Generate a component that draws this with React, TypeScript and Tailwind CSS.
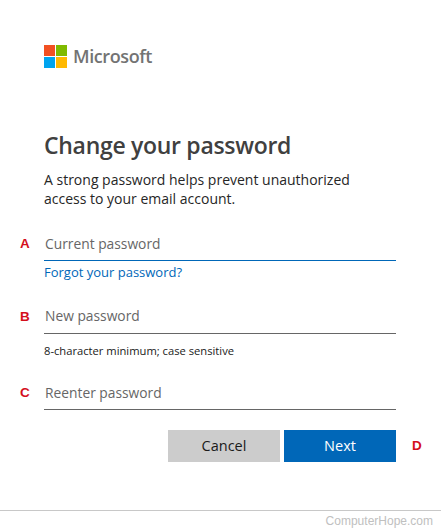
export default function App() {
  const font = { fontFamily: '"Open Sans", "Noto Sans", sans-serif' };
  const Letter = ({ c }: { c: string }) => (
    <div className="w-[44px] pl-[20px] text-[13.5px] font-bold text-[#d40f1c] font-['Liberation_Sans',sans-serif]">{c}</div>
  );
  return (
    <div className="w-[441px] h-[531px] bg-white overflow-hidden flex flex-col font-['Open_Sans',sans-serif]" style={font}>
      <div className="h-[510px] flex flex-col">
        <div className="pl-[44px] pt-[45px] flex items-center h-[68px]">
          <svg width="23" height="23" viewBox="0 0 23 23" className="block shrink-0">
            <rect x="0" y="0" width="11" height="11" fill="#f25022" />
            <rect x="12" y="0" width="11" height="11" fill="#7fba00" />
            <rect x="0" y="12" width="11" height="11" fill="#00a4ef" />
            <rect x="12" y="12" width="11" height="11" fill="#ffb900" />
          </svg>
          <span className="ml-[6px] text-[18px] font-semibold text-[#737373] leading-[23px] tracking-[-0.4px]">Microsoft</span>
        </div>
        <h1 className="pl-[44px] mt-[60px] text-[23px] leading-[34px] font-semibold text-[#404040] tracking-[-0.3px]">Change your password</h1>
        <p className="pl-[44px] mt-[8px] w-[370px] text-[14px] leading-[19px] text-[#262626]">
          A strong password helps prevent unauthorized access to your email account.
        </p>
        <div className="flex items-center mt-[19px]">
          <Letter c="A" />
          <div className="w-[352px] h-[34px] border-b border-[#0067b8] pl-[1px] text-[13.8px] leading-[33px] text-[#666666]">Current password</div>
        </div>
        <div className="pl-[44px] mt-[1px] text-[13px] leading-[20px] text-[#0067b8]">Forgot your password?</div>
        <div className="flex items-center mt-[18px]">
          <Letter c="B" />
          <div className="w-[352px] h-[34px] border-b border-[#666666] pl-[1px] text-[13.8px] leading-[31px] text-[#666666]">New password</div>
        </div>
        <div className="pl-[44px] mt-[9px] text-[11.2px] leading-[16px] text-[#1a1a1a]">8-character minimum; case sensitive</div>
        <div className="flex items-center mt-[17px]">
          <Letter c="C" />
          <div className="w-[352px] h-[34px] border-b border-[#666666] pl-[1px] text-[13.8px] leading-[33px] text-[#666666]">Reenter password</div>
        </div>
        <div className="flex items-center mt-[20px] pl-[168px]">
          <button className="w-[112px] h-[32px] bg-[#cccccc] text-[14.5px] text-[#1a1a1a]">Cancel</button>
          <button className="ml-[4px] w-[112px] h-[32px] bg-[#0067b8] text-[14.5px] text-white">Next</button>
          <span className="ml-[16px] text-[13.5px] font-bold text-[#d40f1c] font-['Liberation_Sans',sans-serif]">D</span>
        </div>
      </div>
      <div className="border-t border-[#c8c8c8] text-right pr-[8px] pt-[1px] text-[12px] leading-[18px] text-[#c0c0c0] font-['Liberation_Sans',sans-serif]">ComputerHope.com</div>
    </div>
  );
}
